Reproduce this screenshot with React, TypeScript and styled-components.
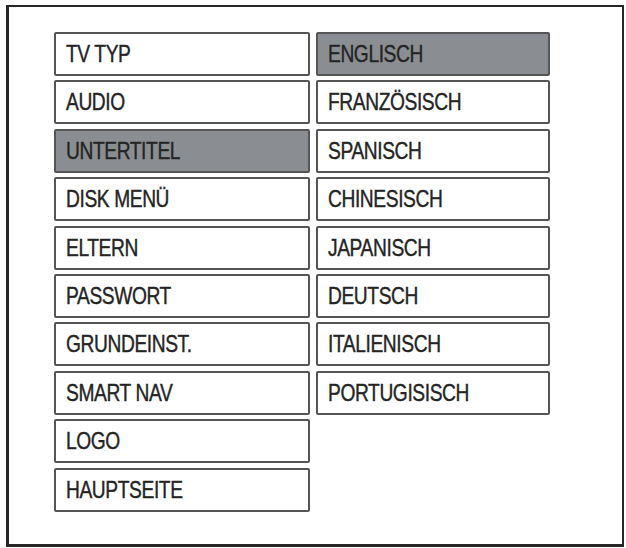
import styled, { createGlobalStyle } from 'styled-components';

const GlobalStyle = createGlobalStyle`
  html, body {
    margin: 0;
    padding: 0;
    background: #ffffff;
  }
`;

const Frame = styled.div`
  box-sizing: border-box;
  margin: 5px 0 0 6px;
  width: 618px;
  height: 542px;
  border: 2px solid #262626;
  border-left-width: 3px;
  border-bottom-width: 3px;
  background: #ffffff;
  padding: 25px 0 0 45px;
  display: flex;
  gap: 6px;
  align-items: flex-start;
`;

const Column = styled.div<{ $width: number }>`
  display: flex;
  flex-direction: column;
  gap: 4.4px;
  width: ${(p) => p.$width}px;
`;

const Item = styled.div<{ $selected?: boolean }>`
  box-sizing: border-box;
  height: 44px;
  display: flex;
  align-items: center;
  padding-left: 10px;
  border: 2px solid #555555;
  border-radius: 2px;
  background: ${(p) => (p.$selected ? '#8a8e92' : '#ffffff')};
  overflow: hidden;
`;

const Label = styled.span`
  display: inline-block;
  font-family: 'Liberation Sans', Arial, sans-serif;
  font-size: 24px;
  letter-spacing: -0.5px;
  color: #242424;
  -webkit-text-stroke: 0.4px #242424;
  white-space: nowrap;
  transform: scaleX(0.8);
  transform-origin: left center;
`;

const menu = [
  'TV TYP',
  'AUDIO',
  'UNTERTITEL',
  'DISK MENÜ',
  'ELTERN',
  'PASSWORT',
  'GRUNDEINST.',
  'SMART NAV',
  'LOGO',
  'HAUPTSEITE',
];

const languages = [
  'ENGLISCH',
  'FRANZÖSISCH',
  'SPANISCH',
  'CHINESISCH',
  'JAPANISCH',
  'DEUTSCH',
  'ITALIENISCH',
  'PORTUGISISCH',
];

export default function App() {
  return (
    <>
      <GlobalStyle />
      <Frame>
        <Column $width={256}>
          {menu.map((m) => (
            <Item key={m} $selected={m === 'UNTERTITEL'}>
              <Label>{m}</Label>
            </Item>
          ))}
        </Column>
        <Column $width={234}>
          {languages.map((l) => (
            <Item key={l} $selected={l === 'ENGLISCH'}>
              <Label>{l}</Label>
            </Item>
          ))}
        </Column>
      </Frame>
    </>
  );
}
